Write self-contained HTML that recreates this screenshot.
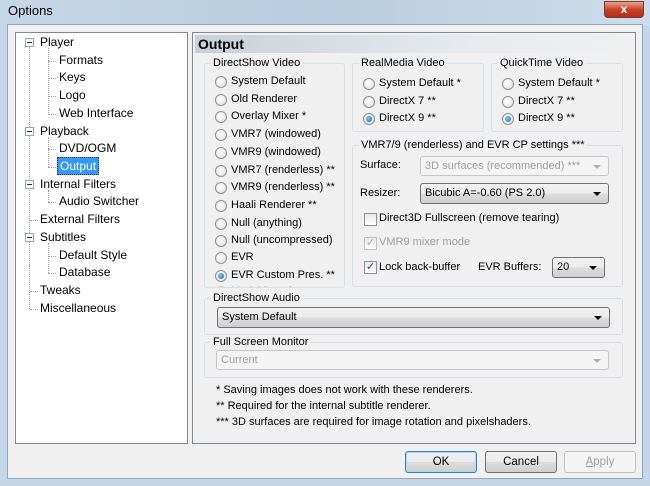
<!DOCTYPE html><html><head><style>
*{box-sizing:border-box;margin:0;padding:0}
body{width:650px;height:486px;overflow:hidden;background:#c4d6e7;font-family:"Liberation Sans",sans-serif;font-size:11px;color:#000;position:relative}
.a{position:absolute;white-space:nowrap}
.grp{position:absolute;border:1px solid #d5dfe5;border-radius:3px}
.gl{position:absolute;background:#f0f0f0;padding:0 2px;top:-8px;left:6px;line-height:14px}
.r{position:absolute;width:12px;height:12px;border-radius:50%;border:1px solid #8f8f8f;background:radial-gradient(circle at 40% 40%,#fff,#dcdcdc)}
.r.on::after{content:"";position:absolute;left:2px;top:2px;width:6px;height:6px;border-radius:50%;background:radial-gradient(circle at 40% 40%,#7fd0ff,#0a5ca8)}
.cb{position:absolute;width:13px;height:13px;border:1px solid #8f8f8f;background:linear-gradient(#e8e8e8,#fff);font-size:11px;line-height:11px;text-align:center;color:#2a4fa0}
.combo{position:absolute;border:1px solid #707070;border-radius:3px;background:linear-gradient(#f2f2f2,#ebebeb 50%,#dddddd 50%,#cfcfcf);padding-left:4px;line-height:18px}
.combo.dis{border-color:#c6c6c6;background:#f4f4f4;color:#a0a0a0}
.combo::after{content:"";position:absolute;right:7px;top:8px;border:4px solid transparent;border-top:4px solid #000;border-bottom:0}
.combo.dis::after{border-top-color:#b0b0b0}
.btn{position:absolute;border:1px solid #707070;border-radius:3px;background:linear-gradient(#f2f2f2,#ebebeb 50%,#dddddd 50%,#cfcfcf);text-align:center;line-height:20px;font-size:11.5px}
.tl{font-size:12px}
.pm{position:absolute;width:9px;height:9px;border:1px solid #9aa4ad;background:#fff}
.pm::after{content:"";position:absolute;left:1px;top:3px;width:5px;height:1px;background:#333}
.dot{position:absolute;border-left:1px dotted #a0a0a0}
.hd{position:absolute;border-top:1px dotted #a0a0a0}
</style></head><body>
<div class="a" style="left:0;top:0;width:650px;height:26px;background:linear-gradient(90deg,#c5d7e8,#b9cde0 50%,#cddcea)"></div>
<div class="a" style="left:8px;top:3px;font-size:13px">Options</div>
<div class="a" style="left:604px;top:1px;width:40px;height:17px;border:1px solid #7a3a2a;border-radius:0 0 4px 4px;background:linear-gradient(#e9a58f,#c8432a 50%,#b52d14);color:#fff;font-weight:bold;text-align:center;line-height:15px;font-size:12px">x</div>
<div class="a" style="left:7px;top:24px;width:636px;height:455px;background:#f0f0f0;border:1px solid #8ea5bd"></div>
<!-- tree -->
<div class="a" style="left:15px;top:32px;width:173px;height:412px;background:#fff;border:1px solid #828790"></div>
<div class="dot" style="left:29px;top:47px;height:218px"></div>
<div class="dot" style="left:48px;top:48px;height:67px"></div>
<div class="dot" style="left:48px;top:137px;height:30px"></div>
<div class="dot" style="left:48px;top:190px;height:12px"></div>
<div class="dot" style="left:48px;top:243px;height:30px"></div>
<div class="dot" style="left:29px;top:265px;height:44px"></div>
<div class="pm" style="left:25px;top:38px"></div><div class="pm" style="left:25px;top:127px"></div><div class="pm" style="left:25px;top:180px"></div><div class="pm" style="left:25px;top:233px"></div>
<div class="hd" style="left:48px;top:61px;width:8px"></div><div class="hd" style="left:48px;top:78px;width:8px"></div><div class="hd" style="left:48px;top:96px;width:8px"></div><div class="hd" style="left:48px;top:114px;width:8px"></div><div class="hd" style="left:48px;top:149px;width:8px"></div><div class="hd" style="left:48px;top:167px;width:8px"></div><div class="hd" style="left:48px;top:202px;width:8px"></div><div class="hd" style="left:48px;top:256px;width:8px"></div><div class="hd" style="left:48px;top:273px;width:8px"></div><div class="hd" style="left:30px;top:220px;width:8px"></div><div class="hd" style="left:30px;top:291px;width:8px"></div><div class="hd" style="left:30px;top:309px;width:8px"></div>
<div class="a tl" style="left:40px;top:35px">Player</div>
<div class="a tl" style="left:59px;top:53px">Formats</div>
<div class="a tl" style="left:59px;top:70px">Keys</div>
<div class="a tl" style="left:59px;top:88px">Logo</div>
<div class="a tl" style="left:59px;top:106px">Web Interface</div>
<div class="a tl" style="left:40px;top:124px">Playback</div>
<div class="a tl" style="left:59px;top:141px">DVD/OGM</div>
<div class="a tl" style="left:57px;top:157px;background:#3399ff;color:#fff;padding:1px 2px;border:1px dotted #333">Output</div>
<div class="a tl" style="left:40px;top:177px">Internal Filters</div>
<div class="a tl" style="left:59px;top:194px">Audio Switcher</div>
<div class="a tl" style="left:40px;top:212px">External Filters</div>
<div class="a tl" style="left:40px;top:230px">Subtitles</div>
<div class="a tl" style="left:59px;top:248px">Default Style</div>
<div class="a tl" style="left:59px;top:265px">Database</div>
<div class="a tl" style="left:40px;top:283px">Tweaks</div>
<div class="a tl" style="left:40px;top:301px">Miscellaneous</div>
<!-- right panel -->
<div class="a" style="left:192px;top:32px;width:444px;height:412px;border:1px solid #828790;background:#f0f0f0"></div>
<div class="a" style="left:195px;top:35px;width:437px;height:18px;background:linear-gradient(90deg,#c8d0d8,#e6eaee 60%,#f0f0f0);font-weight:bold;font-size:14px;padding-left:3px;line-height:18px">Output</div>
<div class="grp" style="left:204px;top:63px;width:141px;height:225px"><span class="gl">DirectShow Video</span></div>
<div class="a" style="left:205px;top:64px;width:139px;height:223px;overflow:hidden">
<div class="r" style="left:10px;top:12px"></div><div class="a" style="left:26px;top:11px">System Default</div>
<div class="r" style="left:10px;top:30px"></div><div class="a" style="left:26px;top:29px">Old Renderer</div>
<div class="r" style="left:10px;top:47px"></div><div class="a" style="left:26px;top:46px">Overlay Mixer *</div>
<div class="r" style="left:10px;top:65px"></div><div class="a" style="left:26px;top:64px">VMR7 (windowed)</div>
<div class="r" style="left:10px;top:83px"></div><div class="a" style="left:26px;top:82px">VMR9 (windowed)</div>
<div class="r" style="left:10px;top:101px"></div><div class="a" style="left:26px;top:100px">VMR7 (renderless) **</div>
<div class="r" style="left:10px;top:118px"></div><div class="a" style="left:26px;top:117px">VMR9 (renderless) **</div>
<div class="r" style="left:10px;top:136px"></div><div class="a" style="left:26px;top:135px">Haali Renderer **</div>
<div class="r" style="left:10px;top:154px"></div><div class="a" style="left:26px;top:153px">Null (anything)</div>
<div class="r" style="left:10px;top:171px"></div><div class="a" style="left:26px;top:170px">Null (uncompressed)</div>
<div class="r" style="left:10px;top:188px"></div><div class="a" style="left:26px;top:187px">EVR</div>
<div class="r on" style="left:10px;top:206px"></div><div class="a" style="left:26px;top:205px">EVR Custom Pres. **</div>
<div class="r" style="left:10px;top:222px;opacity:.5"></div><div class="a" style="left:26px;top:221px;color:#aaa">Madshi renderer</div>
</div>
<div class="grp" style="left:352px;top:63px;width:132px;height:69px"><span class="gl">RealMedia Video</span></div>
<div class="r" style="left:363px;top:78px"></div><div class="a" style="left:379px;top:77px">System Default *</div>
<div class="r" style="left:363px;top:96px"></div><div class="a" style="left:379px;top:95px">DirectX 7 **</div>
<div class="r on" style="left:363px;top:113px"></div><div class="a" style="left:379px;top:112px">DirectX 9 **</div>
<div class="grp" style="left:491px;top:63px;width:132px;height:69px"><span class="gl">QuickTime Video</span></div>
<div class="r" style="left:502px;top:78px"></div><div class="a" style="left:518px;top:77px">System Default *</div>
<div class="r" style="left:502px;top:96px"></div><div class="a" style="left:518px;top:95px">DirectX 7 **</div>
<div class="r on" style="left:502px;top:113px"></div><div class="a" style="left:518px;top:112px">DirectX 9 **</div>
<div class="grp" style="left:352px;top:145px;width:271px;height:142px"><span class="gl">VMR7/9 (renderless) and EVR CP settings ***</span></div>
<div class="a" style="left:360px;top:159px">Surface:</div>
<div class="combo dis" style="left:420px;top:156px;width:189px;height:20px">3D surfaces (recommended) ***</div>
<div class="a" style="left:360px;top:187px">Resizer:</div>
<div class="combo" style="left:420px;top:183px;width:189px;height:21px">Bicubic A=-0.60 (PS 2.0)</div>
<div class="cb" style="left:364px;top:213px"></div><div class="a" style="left:379px;top:212px">Direct3D Fullscreen (remove tearing)</div>
<div class="cb" style="left:364px;top:237px;color:#aaa;border-color:#c0c0c0">✓</div><div class="a" style="left:379px;top:236px;color:#a0a0a0">VMR9 mixer mode</div>
<div class="cb" style="left:364px;top:261px">✓</div><div class="a" style="left:379px;top:261px">Lock back-buffer</div>
<div class="a" style="left:478px;top:261px">EVR Buffers:</div>
<div class="combo" style="left:552px;top:257px;width:53px;height:21px">20</div>
<div class="grp" style="left:204px;top:298px;width:419px;height:37px"><span class="gl">DirectShow Audio</span></div>
<div class="combo" style="left:217px;top:307px;width:393px;height:21px">System Default</div>
<div class="grp" style="left:204px;top:342px;width:419px;height:36px"><span class="gl">Full Screen Monitor</span></div>
<div class="combo dis" style="left:216px;top:350px;width:393px;height:20px">Current</div>
<div class="a" style="left:216px;top:384px">* Saving images does not work with these renderers.</div>
<div class="a" style="left:216px;top:400px">** Required for the internal subtitle renderer.</div>
<div class="a" style="left:216px;top:416px">*** 3D surfaces are required for image rotation and pixelshaders.</div>
<div class="btn" style="left:405px;top:451px;width:72px;height:22px;border-color:#3c7fb1;box-shadow:inset 0 0 0 1px #9fdcff">OK</div>
<div class="btn" style="left:485px;top:451px;width:72px;height:22px">Cancel</div>
<div class="btn" style="left:564px;top:451px;width:72px;height:22px;background:#f4f4f4;border-color:#c0c0c0;color:#a0a0a0"><u>A</u>pply</div>
</body></html>
